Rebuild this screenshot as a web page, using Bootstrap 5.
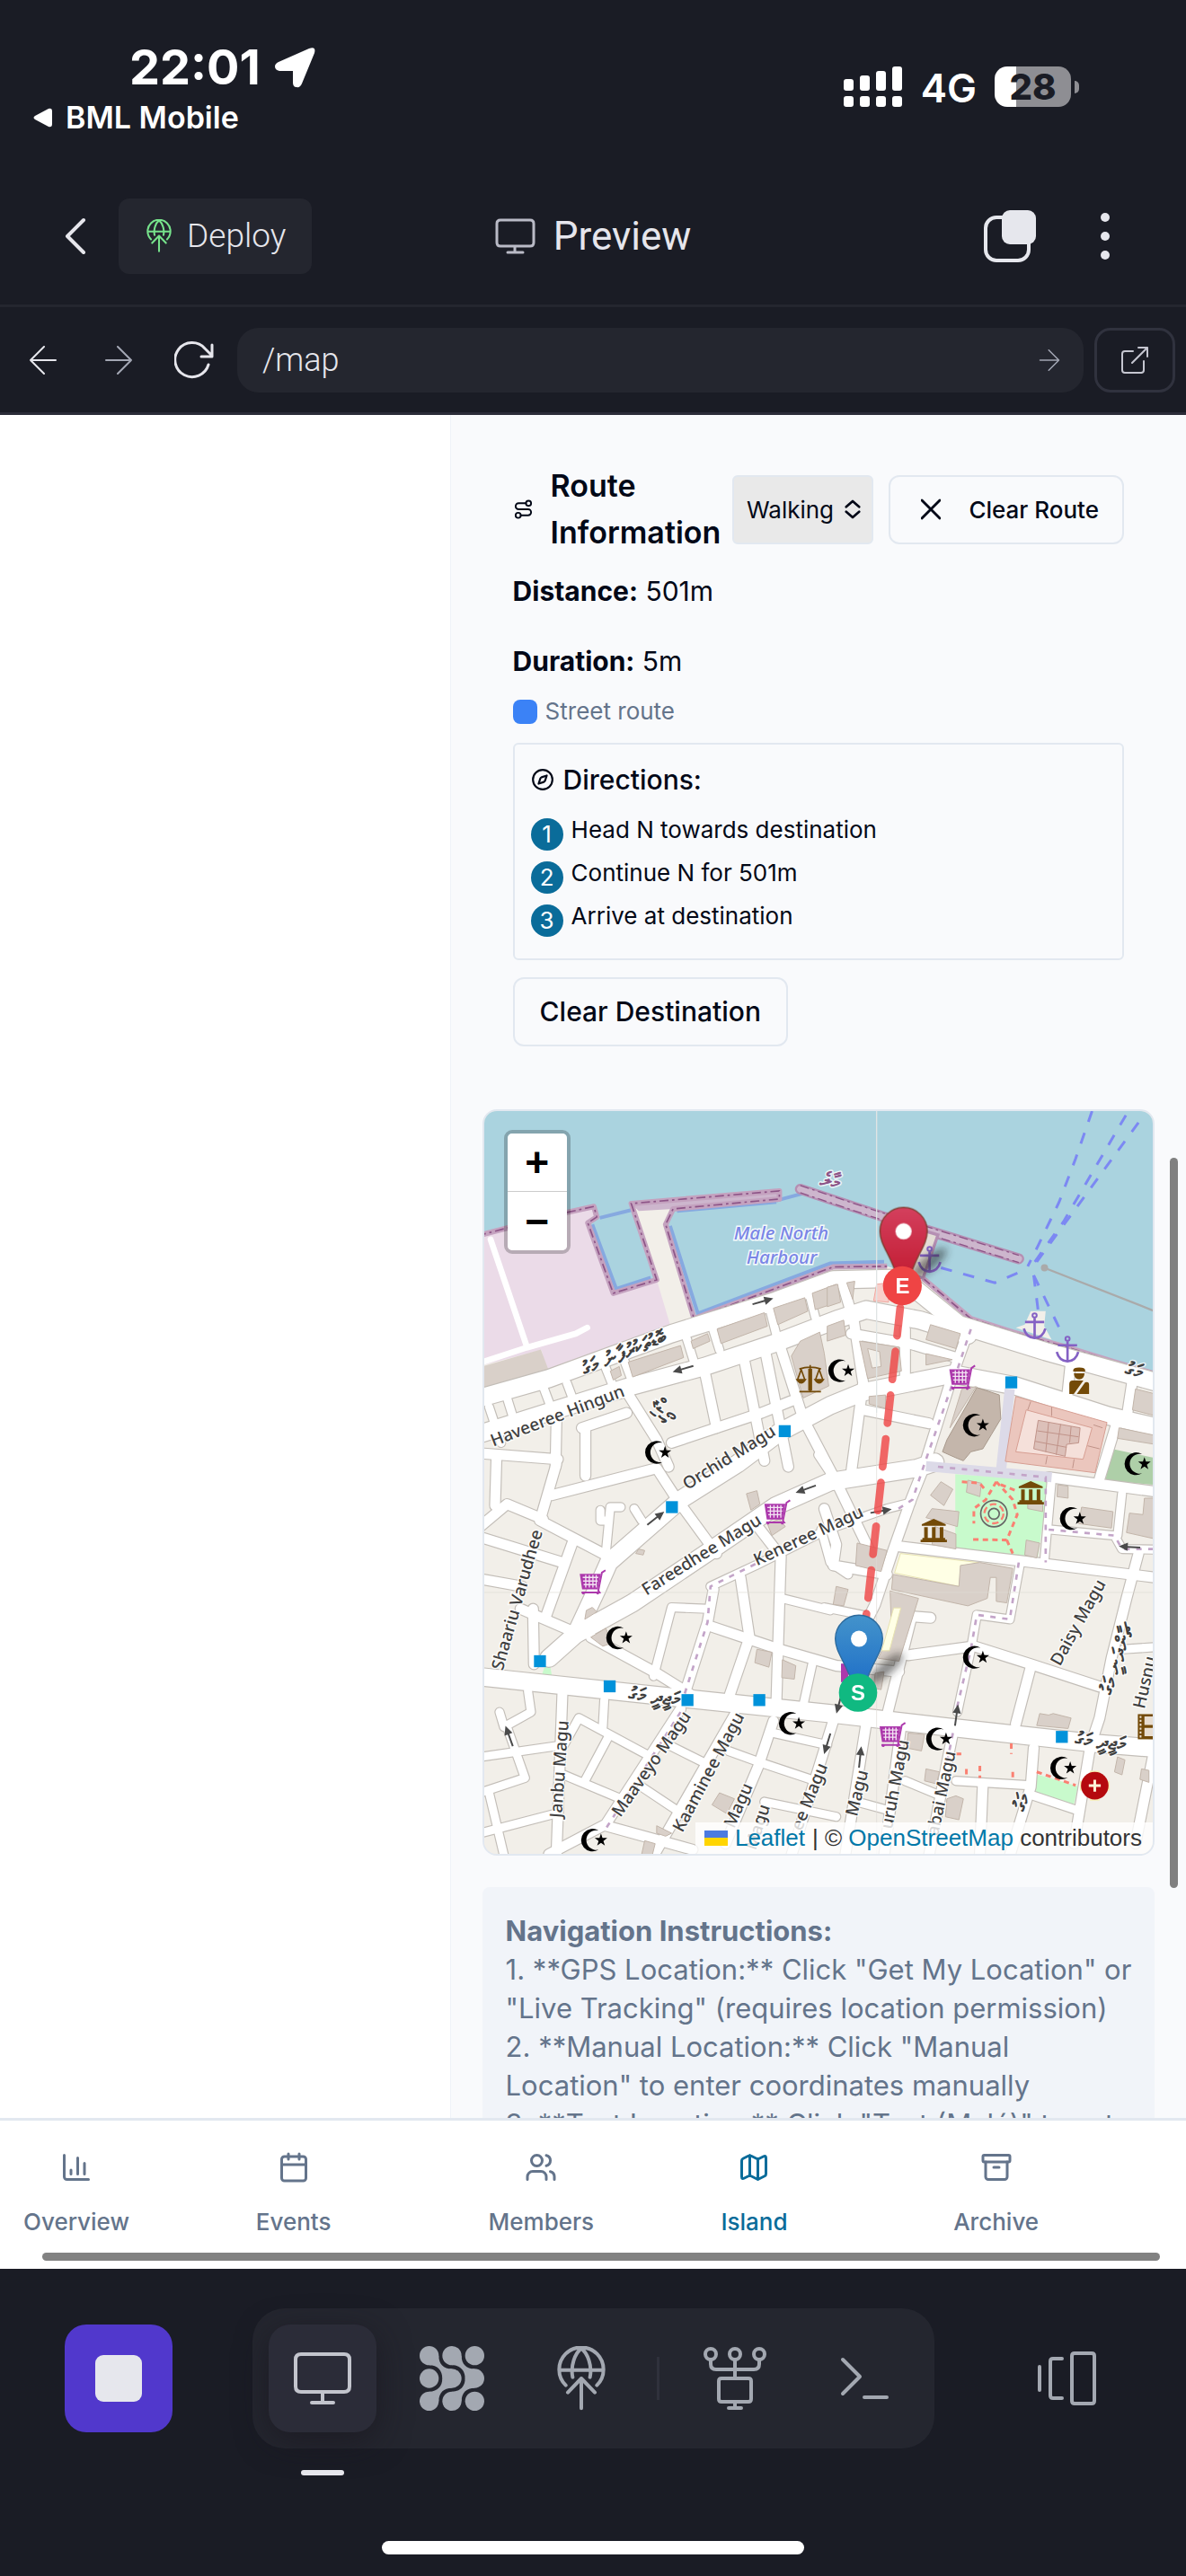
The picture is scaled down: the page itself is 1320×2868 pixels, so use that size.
<!DOCTYPE html>
<html lang="en">
<head>
<meta charset="utf-8">
<meta name="viewport" content="width=device-width, initial-scale=1">
<title>Preview – /map</title>
<link href="https://cdn.jsdelivr.net/npm/bootstrap@5.3.0/dist/css/bootstrap.min.css" rel="stylesheet">
<script src="https://cdn.jsdelivr.net/npm/bootstrap@5.3.0/dist/js/bootstrap.bundle.min.js" defer></script>
<style>
:root{--shell:#1a1c25;--shell-2:#24262f;--shell-3:#2b2c38;--ink:#020817;--muted:#64748b;--line:#e2e8f0;--brand:#0a6c9a}
body{height:100vh;background:var(--shell);font-family:Inter,"Liberation Sans",sans-serif;color:var(--ink);overflow:hidden}
button,a{color:inherit;text-decoration:none}
svg{display:block;flex:none}
.ln{fill:none;stroke:currentColor;stroke-linecap:round;stroke-linejoin:round}
.plain{background:none;border:0;padding:0}
.plex{font-family:Roboto,"Liberation Sans",sans-serif}
/* phone status bar */
.status-area{height:186px;color:#fff}
.status-left{padding:43px 0 0 36px}
.clock{font-size:54px;line-height:64px;font-weight:700;padding-left:108px;gap:16px}
.back-app{font-size:34px;line-height:48px;font-weight:600;gap:14px}
.status-right{padding:70px 119px 0 0;gap:20px;font-size:44px;line-height:56px;font-weight:600}
.battery{width:85px;height:45px;border-radius:14px;background:linear-gradient(90deg,#fff 28%,#8e8e93 28%);color:var(--shell);font-weight:800;font-size:40px;line-height:45px}
.battery-tip{width:5px;height:14px;border-radius:0 6px 6px 0;background:#8e8e93}
/* tool header */
.tool-head{height:156px;border-bottom:3px solid var(--shell-2);color:#e6e6ec;padding:0 72px}
.head-end{gap:66px}
.deploy-btn{background:var(--shell-2);border-radius:12px;height:84px;padding:0 29px 0 31px;gap:17px;font-size:37px;margin-left:36px;font-weight:300}
.tool-title{font-size:44px;gap:20px;font-weight:400}
.tool-title svg{color:#b9bac6}
.url-row{height:120px;border-bottom:3px solid var(--shell-3);padding:0 12px 0 26px;color:#e6e6ec}
.url-nav{gap:40px;padding-right:26px}
.url-nav button{width:44px}
.url-nav svg{margin:auto}
.url-box{background:var(--shell-2);border-radius:24px;height:72px;padding:0 26px 0 28px}
.url-box input{background:none;border:0;color:#e6e6ec;font-size:36px;font-weight:300;outline:0;min-width:0}
.dim{color:#a3a7b4}
.open-btn{width:90px;height:72px;border:3px solid #30323e;border-radius:18px;margin-left:12px;color:#c5c6d0}
/* app */
.app-left{flex:0 0 38%;background:#fff;border-right:1px solid #eff3f8}
.app-panel{background:#f9fafc;padding:53px 35px 0}
.page-thumb{right:9px;top:827px;width:9px;height:813px;border-radius:5px;background:#808080}
.route-card{padding:0 34px 70px}
.route-title{font-size:34px;line-height:52px;font-weight:600;gap:19px}
.mode-pick select{appearance:none;width:157px;height:77px;border:2px solid var(--line);border-radius:6px;background:#e9e9e9;font-size:26px;padding:0 14px;color:var(--ink)}
.mode-pick svg{right:14px;top:27px;pointer-events:none}
.out-btn{border:2px solid var(--line);border-radius:12px;background:#f9fafc;height:77px;font-weight:500;white-space:nowrap}
.clear-route{font-size:26px;width:262px;margin-left:17px;gap:31px;padding:0 26px}
.stat{font-size:30px;line-height:48px;margin-bottom:30px}
.swatch{width:27px;height:27px;border-radius:8px;background:#3b82f6}
.street{font-size:26px;line-height:40px;color:var(--muted);gap:9px;margin:-18px 0 15px}
.dir-box{border:2px solid var(--line);border-radius:6px;padding:18px 18px 24px;margin-bottom:19px}
.dir-head{font-size:30px;line-height:42px;font-weight:500;gap:10px;margin-bottom:17px}
.dir-step{font-size:26px;line-height:36px;height:41px;margin-bottom:7px;gap:9px}
.dir-step:last-child{margin-bottom:0}
.step-no{width:36px;height:36px;border-radius:50%;background:var(--brand);color:#fff;margin-top:5px}
.clear-dest{font-size:30px;padding:0 28px}
.map-frame{border:2px solid var(--line);border-radius:16px;overflow:hidden;margin-bottom:35px;background:#f2efe9}
.map-frame>svg{width:100%;height:auto}
.zoom-ctl{left:22px;top:21px;border:4px solid rgba(0,0,0,.22);border-radius:9px;background-clip:padding-box}
.zoom-ctl button{width:66px;height:65px;border:0;background:#fff;font:700 46px/60px "Liberation Sans",sans-serif;color:#000;padding:0}
.zoom-ctl button:first-child{border-bottom:1px solid #ccc;border-radius:5px 5px 0 0}
.zoom-ctl button:last-child{border-radius:0 0 5px 5px}
.credit{right:0;bottom:0;background:rgba(255,255,255,.8);font:26px/35px "Liberation Sans",Arial,sans-serif;color:#333;padding:0 12px 0 10px;gap:8px}
.credit a{color:#0078a8}
.notes{background:#f1f4f9;border-radius:8px;padding:27px 20px 26px 26px;font-size:31px;line-height:43px;color:var(--muted)}
.tabs-row{height:168px;background:#fff;border-top:3px solid var(--line);padding:34px 0 0 26px;color:var(--muted);font-size:26px;font-weight:500;line-height:40px}
.tabs-row a{gap:23px}
.tabs-row .on{color:var(--brand)}
.tabs-thumb{left:47px;right:29px;bottom:9px;height:9px;border-radius:5px;background:#828282}
/* dock */
.dock-area{height:342px;padding:44px 72px 24px}
.stop-btn{width:120px;height:120px;border-radius:24px;background:#5138cc}
.stop-btn span{width:52px;height:52px;border-radius:9px;background:#e6e7ed}
.dock-group{background:var(--shell-2);border-radius:36px;padding:18px;gap:24px;color:#a3a8b1;margin-right:23px}
.dock-group button{width:120px;height:120px;border-radius:24px}
.dock-group .active{background:var(--shell-3);color:#c3c5cd;box-shadow:0 9px 36px rgba(24,20,28,.6)}
.dock-sep{width:3px;height:48px;background:#2f313c}
.under{width:48px;height:6px;border-radius:3px;background:#e6e6ec;left:36px;top:162px}
.home-bar{width:470px;height:15px;border-radius:8px;background:#fff}
/* map drawing */
#roads path{fill:none;stroke:var(--c);stroke-linejoin:round;stroke-linecap:round;stroke-width:calc(27px + var(--e))}
#roads .w1 path{stroke-width:calc(58px + var(--e))}
#roads .w2 path{stroke-width:calc(33px + var(--e))}
.blg path{fill:#d9d0c9;stroke:#c2b5aa;stroke-width:3}
.foot path{fill:none;stroke:#c3a4c8;stroke-width:8;stroke-dasharray:18 22}
.redfoot path{fill:none;stroke:#fa8072;stroke-width:9;stroke-dasharray:18 14}
.ferry path{fill:none;stroke:#7c88f3;stroke-width:9;stroke-dasharray:38 39}
.lbl text{font-family:"Noto Sans",sans-serif;font-size:57px;font-weight:500;fill:#3f3f3f;stroke:#fff;stroke-width:9px;stroke-opacity:.75;paint-order:stroke;text-anchor:middle}
.lbl .hb{font-style:italic;font-size:62px;fill:#7a86e6;stroke-opacity:.9}
.lbl .dv text{font-size:66px;font-weight:700}
.pin-t{font:700 72px "Liberation Sans",sans-serif;fill:#fff;text-anchor:middle}
</style>
</head>
<body class="d-flex flex-column">
<svg width="0" height="0" class="position-absolute" aria-hidden="true">
 <symbol id="i-globe" viewBox="0 0 162 216"><path class="ln" stroke-width="12" d="M29 131A74 74 0 1 1 133 131M7 80H155M52 104C44 66 60 24 81 8C102 24 118 66 110 104M81 208V108M36 155L81 108L126 155"/></symbol>
 <symbol id="i-monitor" viewBox="0 0 72 72"><path class="ln" stroke-width="4" d="M12 9H60Q66 9 66 15V45Q66 51 60 51H12Q6 51 6 45V15Q6 9 12 9ZM36 51V63M24 63H48"/></symbol>
 <symbol id="i-arrow" viewBox="0 0 32 32"><path class="ln" stroke-width="2" d="M2 16H30M15 1L30 16L15 31"/></symbol>
</svg>

<header class="status-area flex-shrink-0 d-flex justify-content-between">
 <div class="status-left">
  <div class="clock d-flex align-items-center">22:01
   <svg width="45" height="45" viewBox="0 0 45 45"><path fill="#fff" d="M38 1Q46-2 44 6L30 40Q28 45 24 44Q20 44 20 39V26H5Q0 25 0 21Q0 18 4 16Z"/></svg></div>
  <a href="#" class="back-app d-flex align-items-center"><svg width="23" height="22" viewBox="0 0 23 22"><path fill="#fff" d="M3 9L18 1Q22 0 22 4V18Q22 22 18 21L3 13Q0 11 3 9Z"/></svg>BML Mobile</a>
 </div>
 <div class="status-right d-flex align-items-start">
  <svg width="66" height="56" viewBox="0 0 66 56" fill="#fff"><rect x="0" y="18" width="11" height="13" rx="3"/><rect x="18" y="14" width="11" height="17" rx="3"/><rect x="36" y="9" width="11" height="22" rx="3"/><rect x="54" y="4" width="11" height="27" rx="3"/><rect x="0" y="37" width="11" height="12" rx="3"/><rect x="18" y="37" width="11" height="12" rx="3"/><rect x="36" y="37" width="11" height="12" rx="3"/><rect x="54" y="37" width="11" height="12" rx="3"/></svg>
  <span>4G</span>
  <div class="d-flex align-items-center mt-1"><div class="battery text-center">28</div><div class="battery-tip ms-1"></div></div>
 </div>
</header>

<div class="tool-head plex flex-shrink-0 d-flex align-items-center">
 <div class="d-flex align-items-center col">
  <button class="plain" aria-label="Back"><svg width="24" height="42" viewBox="0 0 24 42"><path class="ln" stroke-width="4" d="M21 3L3 21L21 39"/></svg></button>
  <button class="plain deploy-btn d-flex align-items-center"><svg width="28" height="37" style="color:#76e28b"><use href="#i-globe"/></svg>Deploy</button>
 </div>
 <div class="tool-title d-flex align-items-center"><svg width="45" height="40" viewBox="0 0 45 40"><path class="ln" stroke-width="3" d="M6 2H39Q43 2 43 6V27Q43 31 39 31H6Q2 31 2 27V6Q2 2 6 2ZM22 31V38M14 38H31"/></svg>Preview</div>
 <div class="head-end d-flex align-items-center justify-content-end col">
  <button class="plain" aria-label="Tabs"><svg width="60" height="60" viewBox="0 0 60 60"><rect x="3" y="9" width="48" height="48" rx="12" fill="none" stroke="#e6e7ed" stroke-width="4"/><rect x="21" y="1" width="38" height="38" rx="9" fill="#e6e7ed"/></svg></button>
  <button class="plain me-2" aria-label="More"><svg width="20" height="56" viewBox="0 0 20 56" fill="#e6e7ed"><circle cx="10" cy="7" r="5"/><circle cx="10" cy="28" r="5"/><circle cx="10" cy="49" r="5"/></svg></button>
 </div>
</div>

<div class="url-row plex flex-shrink-0 d-flex align-items-center">
 <div class="url-nav d-flex align-items-center">
  <button class="plain" aria-label="Previous"><svg width="32" height="32" viewBox="0 0 32 32"><path class="ln" stroke-width="2" d="M30 16H2M17 1L2 16L17 31"/></svg></button>
  <button class="plain dim" aria-label="Next"><svg width="32" height="32"><use href="#i-arrow"/></svg></button>
  <button class="plain" aria-label="Reload"><svg width="44" height="42" viewBox="0 0 44 42"><path class="ln" stroke-width="3" d="M38 26A19 19 0 1 1 34 8L42 16M42 4V17H30"/></svg></button>
 </div>
 <div class="url-box d-flex align-items-center flex-fill">
  <input class="flex-fill plex p-0" type="text" value="/map" aria-label="Path">
  <button class="plain dim" aria-label="Go"><svg width="24" height="24"><use href="#i-arrow"/></svg></button>
 </div>
 <button class="plain open-btn d-flex align-items-center justify-content-center" aria-label="Open in new tab"><svg width="32" height="32" viewBox="0 0 32 32"><path class="ln" stroke-width="2" d="M14 6H5Q2 6 2 9V27Q2 30 5 30H23Q26 30 26 27V17M13 19L30 2M20 2H30V12"/></svg></button>
</div>

<main class="d-flex flex-fill overflow-hidden position-relative" style="min-height:0">
 <div class="app-left"></div>
 <section class="app-panel flex-fill">
  <div class="route-card">
   <div class="d-flex align-items-center">
    <h2 class="route-title d-flex align-items-center m-0 flex-fill"><svg width="23" height="24" viewBox="0 0 24 24"><path class="ln" stroke-width="2" d="M9 19h8.500a3.500 3.500 0 0 0 0-7h-11a3.500 3.500 0 0 1 0-7H15"/><circle class="ln" stroke-width="2" cx="6" cy="19" r="3"/><circle class="ln" stroke-width="2" cx="18" cy="5" r="3"/></svg><span>Route<br>Information</span></h2>
    <label class="mode-pick position-relative"><select aria-label="Travel mode"><option>Walking</option><option>Cycling</option></select><svg class="position-absolute" width="18" height="22" viewBox="0 0 20 24"><path class="ln" stroke-width="3" d="M2 9L10 2L18 9M2 15L10 22L18 15"/></svg></label>
    <button class="out-btn clear-route d-flex align-items-center justify-content-end"><svg width="22" height="24" viewBox="0 0 22 22"><path class="ln" stroke-width="3" d="M1 1L21 21M21 1L1 21"/></svg>Clear Route</button>
   </div>
   <div class="stat" style="margin-top:15px"><strong>Distance:</strong> 501m</div>
   <div class="stat"><strong>Duration:</strong> 5m</div>
   <div class="street d-flex align-items-center"><span class="swatch"></span>Street route</div>
   <div class="dir-box">
    <div class="dir-head d-flex align-items-center"><svg width="26" height="26" viewBox="0 0 24 24"><circle class="ln" stroke-width="2" cx="12" cy="12" r="10"/><path class="ln" stroke-width="2" d="M16.200 7.800L14.400 13.200Q14 14 13.200 14.400L7.800 16.200L9.600 10.800Q10 10 10.800 9.600Z"/></svg>Directions:</div>
    <div class="dir-step d-flex"><span class="step-no text-center">1</span>Head N towards destination</div>
    <div class="dir-step d-flex"><span class="step-no text-center">2</span>Continue N for 501m</div>
    <div class="dir-step d-flex"><span class="step-no text-center">3</span>Arrive at destination</div>
   </div>
   <button class="out-btn clear-dest">Clear Destination</button>
  </div>

  <div class="map-frame position-relative">
   <svg viewBox="24 51 2235 2484" role="img" aria-label="Street map of Malé">
    <defs>
     <g id="m-mosque"><path d="M22-32A38 38 0 1 0 22 32A33 33 0 1 1 22-32Z"/><path transform="translate(30)" d="M0-22L5-7H21L8 3L13 18L0 9L-13 18L-8 3L-21-7H-5Z"/></g>
     <g id="m-anchor" fill="none" stroke="#8461c4" stroke-width="8"><circle cy="-36" r="7" stroke-width="6"/><path d="M0-28V38M-32-14H32M-36 8Q-28 38 0 40Q28 38 36 8"/></g>
     <g id="m-cart"><path fill="#ac39ac" d="M-38-26H32L22 26H-30Z"/><path d="M-28-14H24M-27 -2H22M-25 10H19M-18-22V20M-6-22V20M6-22V20M17-22V20" stroke="#f3e3f3" stroke-width="4"/><path fill="none" stroke="#ac39ac" stroke-width="6" d="M48-38L36-30L24 30L28 36H-32"/><circle cx="-26" cy="38" r="5" fill="#ac39ac"/><circle cx="22" cy="38" r="5" fill="#ac39ac"/></g>
     <g id="m-museum" fill="#734a08"><path d="M0-40L40-22V-17H-40V-22ZM-32-12H-20V24H-32ZM-6-12H6V24H-6ZM20-12H32V24H20ZM-38 24H38V30H44V38H-44V30H-38Z"/></g>
     <path id="m-bus" fill="#0092da" d="M-20-20H20V20H-20Z"/>
     <g id="m-way" fill="#4a4a4a"><path d="M-36-3H6V-14L36 0L6 14V3H-36Z"/></g>
     <g id="roads">
      <g class="w1">
       <path d="M10 1010L240 945L650 795L1000 685L1190 615L1420 610L1610 765L1900 855L2280 960"/>
       <path d="M10 1130L500 975L760 905L1000 825L1210 745L1300 715L1480 750L1640 800"/>
       <path d="M330 1800L400 1650L440 1560L680 1350L870 1230L1010 1125L1180 1035L1290 990L1590 930L1800 970L2110 1070L2280 1110"/>
       <path d="M240 1880L330 1800L520 1695L780 1520L1000 1370L1180 1290L1470 1245L1530 1225"/>
       <path d="M10 1942L700 2015L1180 2065L1570 2110L2070 2165L2280 2182"/>
      </g>
      <g class="w2">
       <path d="M1640 790L1590 930L1490 1250L1450 1350L1390 1520L1330 1700L1300 1760"/>
       <path d="M1400 1505L1820 1555L2280 1612"/><path d="M1910 1275L2280 1325"/>
       <path d="M1440 1870L1660 1840L1850 1900L2080 1975"/><path d="M1450 1750L1370 2070"/><path d="M1450 1740L1515 1745"/>
       <path d="M1850 1910L1800 2100"/><path d="M2210 1530L2170 1680L2120 1880L2080 2080L2050 2170L1995 2500"/>
       <path d="M770 1770L890 1810L1010 1850L1200 1905L1410 1925"/><path d="M930 1430L1015 1540L1010 1700L1000 2030"/>
       <path d="M880 1610L910 1810L840 2015"/><path d="M790 1650L770 1760L690 2010"/><path d="M380 1810L600 1930L720 2005"/>
       <path d="M145 1715L330 1795"/><path d="M320 1490L230 1740"/><path d="M10 1475L285 1560"/><path d="M10 1615L150 1640"/>
       <path d="M265 1230L210 1420L430 1535"/><path d="M10 1440L100 1365L220 1415"/><path d="M65 1200L60 1370"/>
       <path d="M250 1335L600 1245L665 1345L800 1530"/><path d="M187 1715L190 1900"/>
       <path d="M960 840L1040 1240M890 870L960 1220M760 920L800 1110"/><path d="M650 1160L950 1060L1050 1020"/><path d="M1010 830L1090 1080L1200 1290L1340 1580"/>
       <path d="M500 990L600 1150L640 1240"/><path d="M10 1195L270 1215M265 1090L262 1240M350 1110L500 1060M362 1110L362 1270"/>
       <path d="M1225 640L1260 760L1290 960L1250 1260"/><path d="M1250 795L1450 830L1600 875"/><path d="M1290 1050L1510 1095"/><path d="M1430 780L1430 950"/>
       <path d="M2140 1085L2080 1280"/><path d="M1985 880L1970 1020M2190 950L2170 1080"/>
       <path d="M680 2050L430 2435L240 2535M430 2440L720 2520"/><path d="M860 2070L590 2540"/><path d="M990 2090L940 2240L830 2500"/>
       <path d="M1190 2090L1050 2540M1300 2100L1230 2540M1415 2120L1360 2540M1590 2130L1570 2230L1510 2540M1690 2300L1680 2540M1860 2180L1850 2310L1780 2540"/>
       <path d="M285 2000L265 2540"/><path d="M1160 1380L1200 1500L1190 1570L1370 1600"/><path d="M2260 2200L2200 2500"/>
      </g>
      <g class="w3">
       <path d="M1920 1280L1895 1560"/><path d="M1915 1450L2130 1470L2155 1515L2280 1517M2155 1330L2140 1470"/>
       <path d="M1815 1560L1780 1750L1670 1735L1650 1850L1605 2060"/><path d="M2160 1850L2280 1842"/>
       <path d="M780 1640L930 1570L1170 1450L1370 1380L1450 1360"/><path d="M590 1940L650 1710L770 1715"/><path d="M1120 1900L1085 2060"/>
       <path d="M170 1990L180 2060L90 2110L75 2060M100 2110L160 2280L10 2330"/><path d="M10 2210L290 2170L340 2080L600 2220"/>
       <path d="M425 2020L420 2110M440 2140L360 2290M290 2270L480 2350M10 2465L260 2400M40 2330L90 2540"/>
       <path d="M640 2170L780 2240M550 2310L700 2410M840 2190L950 2230L1130 2290M990 2130L1170 2170M960 2360L1200 2410"/>
       <path d="M1270 2360L1380 2390M1430 2290L1550 2340M1600 2290L1850 2305M1860 2340L2010 2390"/>
       <path d="M430 1530L445 1375L480 1375M440 1420H412V1385M550 1420L525 1380"/><path d="M1150 1450L1180 1560L1240 1600M1160 1710L1310 1740M1020 1680L1180 1720M1200 1290L1140 1200"/>
       <path d="M40 1040L80 1160M100 1010L125 1090M220 970L250 1050M300 960L330 1040M430 910L450 960M490 880L520 960M700 810L725 890M785 770L810 850M975 700L1000 800M1110 660L1130 740"/>
      </g>
     </g>
     <linearGradient id="gr" x2="0" y2="1"><stop stop-color="#d4405e"/><stop offset="1" stop-color="#c31d33"/></linearGradient>
     <linearGradient id="gb" x2="0" y2="1"><stop stop-color="#4393cb"/><stop offset="1" stop-color="#2070c8"/></linearGradient>
     <filter id="soft"><feGaussianBlur stdDeviation="14"/></filter>
    </defs>
    <rect x="0" y="0" width="2300" height="2600" fill="#f2efe9"/>
    <!-- sea, harbour basins and reclaimed land -->
    <path id="sea" fill="#aad3df" d="M0 0H2300V940L2130 890L1970 840L1790 790L1650 745L1490 610L1370 570L1190 572L725 745L630 430L655 378L1010 345V318L515 360L600 615L455 660L370 425L405 410L390 370L300 390L0 468Z"/>
    <path fill="#ebdbe8" d="M0 468L300 390L390 370L405 410L370 425L455 660L600 615L648 775L235 925L215 850L0 905Z"/>
    <path fill="#cdb6cd" d="M515 360L1010 318V345L655 378L540 385Z"/>
    <path fill="none" stroke="#86a9e0" stroke-width="12" d="M410 408L515 382M1000 350L1090 326M385 430L465 645L580 608M668 385L1000 355M645 435L738 728L1180 560L1360 555"/>
    <path fill="none" stroke="#c4a2bf" stroke-width="18" stroke-linejoin="round" d="M0 468L300 390L390 370L400 405L370 425L455 660L600 615L515 360L1010 318V345L655 378L630 430L725 745L1190 572L1370 570M1490 610L1650 745L1790 790L1970 840L2130 890L2300 940"/>
    <path fill="none" stroke="#8d5487" stroke-width="5" stroke-dasharray="30 12 8 12" d="M0 468L300 390L390 370L400 405L370 425L455 660L600 615L515 360L1010 318V345L655 378L630 430L725 745L1190 572L1370 570M1490 610L1650 745L1790 790L1970 840L2130 890L2300 940"/>
    <path fill="none" stroke="#b58fb3" stroke-width="36" stroke-linecap="round" d="M1080 312L1350 402L1810 545"/>
    <path fill="none" stroke="#cdb6cd" stroke-width="22" stroke-linecap="round" d="M1080 312L1350 402L1810 545"/>
    <path fill="none" stroke="#8d5487" stroke-width="4" stroke-dasharray="30 12 8 12" d="M1080 300L1350 390L1810 533M1080 324L1350 414L1810 557"/>
    <path fill="#e4ddd6" stroke="#b58fb3" stroke-width="10" d="M1490 450L1540 465L1490 610L1400 580Z"/>
    <path fill="#f2efe9" d="M1800 775L1830 765L1850 720H1900L1895 770L1920 815Z"/>
    <path stroke="#aaa" stroke-width="7" d="M1895 575L2270 722"/><circle cx="1896" cy="575" r="12" fill="#aaa"/>
    <path fill="#d9d0c9" d="M0 910L213 848L240 920L0 1005Z"/>
    <g fill="none" stroke="#fff" stroke-width="20" stroke-linecap="round"><path d="M45 480L165 835M24 888L165 842L330 795L368 775"/></g>
    <!-- parks, squares, schools -->
    <path fill="#c8facc" d="M1598 1265L1912 1285L1870 1565L1598 1525Z"/>
    <path fill="#c8facc" d="M1870 2268L2008 2308L1990 2388L1858 2345Z"/>
    <path fill="#c8facc" d="M225 1910H245L250 1940H215Z"/>
    <path fill="#aecfa8" d="M2120 1180L2260 1210V1300L2100 1285Z"/>
    <path fill="#ffffe5" stroke="#e8e3b0" stroke-width="3" d="M1415 1530L1675 1560L1610 1640L1395 1595Z"/>
    <use href="#roads" style="--c:#c3beb8;--e:7px"/>
    <use href="#roads" style="--c:#fff;--e:0px"/>
    <path fill="none" stroke="#dcdae8" stroke-width="34" d="M1500 1238L1920 1275M1780 980L1750 1260"/>
    <!-- buildings -->
    <g class="blg">
     <path d="M505 890L680 835L690 875L520 940ZM715 820L770 795L778 820L722 845ZM802 780L960 725L970 770L815 828ZM990 710L1095 675L1105 720L1005 765ZM1120 660L1200 630L1205 690L1130 715ZM445 920L475 905L482 935L455 950Z"/>
     <path d="M1050 870L1080 820L1145 790L1160 860L1175 970L1090 1010Z"/><path d="M1170 640L1205 630L1215 690L1170 705ZM1235 625L1262 620L1255 680ZM1170 770L1225 750L1232 800L1170 820Z"/>
     <path d="M1278 820L1410 840L1418 920L1305 945Z"/><path style="fill:#f2efe9" d="M1305 845L1345 855L1350 905L1320 910Z"/>
     <path d="M1515 765L1615 795L1600 845L1500 815ZM1500 862L1588 882L1500 900ZM1310 1005L1365 1000V1045L1310 1030Z"/>
     <path d="M1270 1495L1370 1520L1350 1590L1265 1570ZM1200 1640L1240 1650L1225 1705L1190 1700ZM1550 1290L1590 1315L1560 1370L1515 1335ZM1520 1380L1610 1390L1605 1440L1500 1410ZM1530 1440L1600 1465V1515L1520 1500ZM1640 1285L1685 1295L1680 1340L1635 1325Z"/>
     <path d="M1390 1600L1610 1640L1615 1570L1680 1560L1790 1580L1770 1695L1735 1690V1610H1715L1705 1680L1640 1705L1385 1650ZM1380 1655L1475 1680L1410 1890L1340 1880L1385 1790Z"/>
     <path style="fill:#ffffe5;stroke:#e8e3b0" d="M1392 1712H1416L1378 1855H1352Z"/>
     <path d="M1840 1360H1890V1390L1840 1380ZM1835 1485L1880 1495L1870 1545L1830 1535ZM1940 1300L1975 1305V1345L1938 1340ZM2020 1375L2125 1390L2120 1445L2010 1430ZM2180 1395L2225 1400L2230 1345H2260V1480L2170 1460Z"/>
     <path d="M1880 2065L1910 2070L1925 2065L1985 2080L1975 2115L1870 2105ZM1440 2130L1495 2135L1485 2190L1435 2180ZM1500 2250L1545 2260L1535 2300L1495 2290ZM1570 2350L1600 2340L1625 2350L1610 2420L1565 2410ZM2140 2210L2165 2220L2155 2270L2130 2260ZM2220 2250L2245 2255V2295L2215 2285ZM1330 1930L1360 1925L1350 1985L1325 1980Z"/>
     <path d="M935 1850L985 1860L975 1910L928 1895ZM1020 1885L1065 1905L1060 1950L1018 1945ZM900 1330L935 1320L945 1365L915 1385ZM970 1430L1010 1415L1030 1440L985 1470ZM365 1720L385 1710L400 1725L360 1750ZM380 1810L430 1780L450 1830L420 1840ZM810 2330L860 2350L835 2400L785 2370ZM600 2440L650 2465L630 2475L600 2465ZM560 2490L595 2500L585 2540L550 2535ZM540 1515L560 1520L555 1535L530 1530Z"/>
     <path style="fill:#c4b6ab;stroke:#a8998c" d="M1670 975L1745 1000L1750 1080L1720 1130L1690 1180L1650 1190L1625 1220L1600 1210L1555 1190L1570 1150Z"/>
     <path d="M1620 980L1668 972L1580 1110ZM2145 1110L2265 1135V1165L2140 1145ZM2200 980L2260 995V1068L2190 1050Z"/>
     <path style="fill:#ebc6bd;stroke:#d79f93" d="M1800 1005L2105 1092L2065 1260L1765 1222Z"/>
     <path style="fill:#f5e0da;stroke:#d79f93" d="M1835 1050L2055 1110L2025 1215L1800 1190Z"/>
     <path style="fill:#dcc0b9;stroke:#c09389" d="M1875 1085L2015 1110L2010 1160L1970 1165L1965 1205L1860 1180Z"/>
     <path style="fill:none;stroke:#c09389" d="M1872 1120L2010 1140M1865 1155L1970 1175M1910 1090L1900 1190M1950 1098L1935 1200M1985 1105L1980 1160M1850 1022L1840 1050M1920 1040V1070M2090 1110L2060 1100M2080 1180L2040 1170M1900 1232L1905 1205M1990 1245L1995 1215"/>
     <path style="fill:#f8cfca;stroke:#f0a8a0" d="M1335 630L1375 625V690L1325 685Z"/>
    </g>
    <g class="foot"><path d="M1650 780L1600 930L1495 1230L1455 1350L1400 1385"/><path d="M1540 1240L1900 1275L1900 1560"/><path d="M1910 1450L2130 1470L2155 1515H2260"/><path d="M1810 1560L1780 1750L1670 1735L1650 1850L1600 2060"/><path d="M930 1565L780 1640L770 1760L690 2010"/><path d="M1590 2130L1570 2230M680 2060L430 2450"/></g>
    <g class="redfoot"><path d="M1620 1290L1680 1295L1700 1320M1735 1290L1700 1350L1660 1380V1430M1735 1290L1790 1350L1805 1400L1770 1485L1650 1483M1770 1485L1790 1530M1750 1300L1800 1320"/><circle cx="1727" cy="1397" r="32" fill="none" stroke="#fa8072" stroke-width="7" stroke-dasharray="22 12"/><path d="M1785 2165V2200M1600 2200H1630M1680 2240V2280M1635 2250V2280M1790 2260V2280M1870 2260L2000 2305"/></g>
    <g fill="none" stroke="#666" stroke-width="5"><circle cx="1727" cy="1397" r="44"/><circle cx="1727" cy="1397" r="18"/></g>
    <path stroke="#e0e4e4" stroke-width="4" d="M1335 0V1060"/><path stroke="#dedbd5" stroke-width="2" d="M1335 1060V2600M0 1660H2300"/>
    <g class="ferry"><path d="M2055 51L2000 210L1945 355L1875 500L1840 570"/><path d="M2168 65L1960 420L1860 560"/><path d="M2210 90L1870 555"/><path d="M1550 575L1730 625L1812 590"/><path d="M1860 600L1875 720"/><path d="M1860 600L1945 775"/></g>
    <!-- labels -->
    <g class="lbl">
     <text class="hb" x="1016" y="481">Male North</text><text class="hb" x="1018" y="561">Harbour</text>
     <text transform="translate(275 1088) rotate(-21)">Haveeree Hingun</text>
     <text transform="translate(852 1225) rotate(-32)">Orchid Magu</text>
     <text transform="translate(760 1550) rotate(-32)">Fareedhee Magu</text>
     <text transform="translate(1115 1488) rotate(-25)">Keneree Magu</text>
     <text transform="translate(152 1690) rotate(-74)">Shaariu Varudhee</text>
     <text transform="translate(294 2252) rotate(-86)">Janbu Magu</text>
     <text transform="translate(598 2244) rotate(-55)">Maaveyo Magu</text>
     <text transform="translate(790 2270) rotate(-62)">Kaaminee Magu</text>
     <text transform="translate(890 2380) rotate(-66)">Magu</text><text transform="translate(955 2450) rotate(-72)">Magu</text>
     <text transform="translate(1128 2350) rotate(-68)">ee Magu</text><text transform="translate(1288 2335) rotate(-76)">Magu</text>
     <text transform="translate(1415 2305) rotate(-79)">uruh Magu</text><text transform="translate(1570 2335) rotate(-78)">abai Magu</text>
     <text transform="translate(2025 1770) rotate(-61)">Daisy Magu</text><text transform="translate(2250 1965) rotate(-77)">Husnu</text>
     <g class="dv">
      <text transform="translate(500 880) rotate(-22)">ބޮޑުތަކުރުފާނު މަގު</text><text transform="translate(590 2030) rotate(6)">މަޖީދީ މަގު</text>
      <text transform="translate(2160 1890) rotate(-72)">ޗާންދަނީ މަގު</text><text transform="translate(2080 2180) rotate(6)">މަޖީދީ މަގު</text>
      <text transform="translate(595 1060) rotate(68)">އޯކިޑް</text><text transform="translate(1840 2370) rotate(-70)">މަގު</text><text transform="translate(2190 940) rotate(14)">މަގު</text>
      <text style="fill:#8d5487" transform="translate(1175 305) rotate(14)">މާލެ</text>
     </g>
    </g>
    <!-- points of interest -->
    <g id="pois">
     <use href="#m-way" transform="translate(955 687) rotate(-16)"/><use href="#m-way" transform="translate(688 913) rotate(164)"/><use href="#m-way" transform="translate(597 1412) rotate(-38)"/><use href="#m-way" transform="translate(1098 1315) rotate(160)"/><use href="#m-way" transform="translate(1350 1388) rotate(-10)"/><use href="#m-way" transform="translate(107 2140) rotate(-110)"/><use href="#m-way" transform="translate(1170 2166) rotate(107)"/><use href="#m-way" transform="translate(1280 2210) rotate(-84)"/><use href="#m-way" transform="translate(1602 2070) rotate(-82)"/><use href="#m-way" transform="translate(2180 1508) rotate(184)"/><use href="#m-way" transform="translate(1210 2030) rotate(105)"/>
     <use href="#m-mosque" x="598" y="1192"/><use href="#m-mosque" x="1210" y="919"/><use href="#m-mosque" x="1660" y="1101"/><use href="#m-mosque" x="2200" y="1230"/><use href="#m-mosque" x="468" y="1812"/><use href="#m-mosque" x="1045" y="2098"/><use href="#m-mosque" x="384" y="2488"/><use href="#m-mosque" x="1984" y="1413"/><use href="#m-mosque" x="1660" y="1877"/><use href="#m-mosque" x="1537" y="2150"/><use href="#m-mosque" x="1952" y="2247"/>
     <use href="#m-bus" x="1028" y="1121"/><use href="#m-bus" x="1785" y="958"/><use href="#m-bus" x="651" y="1375"/><use href="#m-bus" x="210" y="1890"/><use href="#m-bus" x="443" y="1974"/><use href="#m-bus" x="703" y="2020"/><use href="#m-bus" x="943" y="2020"/><use href="#m-bus" x="1954" y="2143"/>
     <use href="#m-cart" x="1616" y="940"/><use href="#m-cart" x="998" y="1390"/><use href="#m-cart" x="381" y="1624"/><use href="#m-cart" x="1383" y="2134"/>
     <use href="#m-anchor" x="1512" y="548"/><use href="#m-anchor" x="1863" y="770"/><use href="#m-anchor" x="1973" y="848"/>
     <use href="#m-museum" x="1526" y="1454"/><use href="#m-museum" x="1850" y="1328"/>
     <g transform="translate(1113 945)" fill="none" stroke="#734a08" stroke-width="5"><path d="M0-45V42M-36 44H36M-36-32Q0-44 36-32M-30-30L-42 4M-30-30L-18 4M30-30L18 4M30-30L42 4" /><path fill="#734a08" d="M-44 4H-16Q-30 26-44 4ZM16 4H44Q30 26 16 4ZM-4-30H4V38H-4Z"/></g>
     <g transform="translate(2012 952)" fill="#734a08"><path d="M-20-34Q-20-44 0-44Q20-44 20-34V-30H-20ZM-18-24H18Q16-4 0-4Q-16-4-18-24ZM-33 45V12Q-33 0-22 0H14L-18 45ZM-8 45L20 6Q33 2 33 14V45Z"/></g>
     <g transform="translate(2064 2306)"><path d="M-16-50H16V50H-16ZM-50-16H50V16H-50Z" fill="#f6efb4"/><circle r="46" fill="#b50a0e"/><path d="M0-20V20M-20 0H20" stroke="#fff3d8" stroke-width="9"/></g>
     <g transform="translate(2208 2067)"><path d="M0 0H60V84H0Z" fill="#734a08"/><path d="M22 8H60V36H22ZM22 46H60V74H22Z" fill="#e8ddd0"/><path d="M9 6V80" stroke="#e8ddd0" stroke-width="6" stroke-dasharray="7 6"/></g>
     <path fill="#ac39ac" d="M1216 1898H1240V1960H1216Z"/>
    </g>
    <!-- route and markers -->
    <path d="M1422 635L1272 1995" fill="none" stroke="#ef4444" stroke-opacity=".8" stroke-width="26" stroke-linecap="round" stroke-dasharray="94 53" stroke-dashoffset="-74"/>
    <g filter="url(#soft)" fill="#222" opacity=".55"><ellipse cx="1510" cy="560" rx="75" ry="22" transform="rotate(-40 1510 560)"/><ellipse cx="1365" cy="1915" rx="75" ry="22" transform="rotate(-40 1365 1915)"/></g>
    <g transform="translate(1425 453)"><path fill="url(#gr)" stroke="#7a3a2a" stroke-width="4" d="M0-80A79 79 0 0 1 79-1C79 45 45 75 22 150H-22C-45 75-79 45-79-1A79 79 0 0 1 0-80Z"/><circle r="27" fill="#fff"/></g>
    <g transform="translate(1276 1815)"><path fill="url(#gb)" stroke="#2d6a9c" stroke-width="4" d="M0-79A79 79 0 0 1 79 0C79 45 45 75 22 150H-22C-45 75-79 45-79 0A79 79 0 0 1 0-79Z"/><circle r="27" fill="#fff"/></g>
    <circle cx="1421" cy="635" r="65" fill="#ef4444"/><text class="pin-t" x="1422" y="660">E</text>
    <circle cx="1273" cy="1995" r="64" fill="#10b981"/><text class="pin-t" x="1273" y="2020">S</text>
   </svg>
   <div class="zoom-ctl position-absolute d-flex flex-column"><button aria-label="Zoom in">+</button><button aria-label="Zoom out">−</button></div>
   <div class="credit position-absolute d-flex align-items-center"><a href="#" class="d-flex align-items-center gap-2"><svg width="26" height="17" viewBox="0 0 26 17"><path fill="#4c7be1" d="M0 0H26V9H0Z"/><path fill="#ffd500" d="M0 8H26V17H0Z"/></svg>Leaflet</a><span>| © <a href="#">OpenStreetMap</a> contributors</span></div>
  </div>

  <div class="notes"><strong>Navigation Instructions:</strong><br>1. **GPS Location:** Click "Get My Location" or "Live Tracking" (requires location permission)<br>2. **Manual Location:** Click "Manual Location" to enter coordinates manually<br>3. **Test Location:** Click "Test (Malé)" to set</div>
 </section>
 <div class="page-thumb position-absolute"></div>
</main>

<nav class="tabs-row position-relative flex-shrink-0">
 <div class="d-flex">
  <div class="col"><a href="#" class="d-inline-flex flex-column align-items-center"><svg width="36" height="36" viewBox="0 0 24 24"><path class="ln" stroke-width="2" d="M3 3v16a2 2 0 0 0 2 2h16M18 17V9M13 17V5M8 17v-3"/></svg>Overview</a></div>
  <div class="col"><a href="#" class="d-inline-flex flex-column align-items-center"><svg width="36" height="36" viewBox="0 0 24 24"><rect class="ln" stroke-width="2" x="3" y="4" width="18" height="18" rx="2"/><path class="ln" stroke-width="2" d="M8 2v4M16 2v4M3 10h18"/></svg>Events</a></div>
  <div class="col"><a href="#" class="d-inline-flex flex-column align-items-center"><svg width="36" height="36" viewBox="0 0 24 24"><path class="ln" stroke-width="2" d="M16 21v-2a4 4 0 0 0-4-4H6a4 4 0 0 0-4 4v2M22 21v-2a4 4 0 0 0-3-3.870M16 3.130a4 4 0 0 1 0 7.750"/><circle class="ln" stroke-width="2" cx="9" cy="7" r="4"/></svg>Members</a></div>
  <div class="col"><a href="#" class="on d-inline-flex flex-column align-items-center"><svg width="36" height="36" viewBox="0 0 24 24"><path class="ln" stroke-width="2" d="M14 5.500L10 3.500Q9 3 8 3.500L4 5.500Q3 6 3 7V19Q3 21 5 20L8 18.500Q9 18 10 18.500L14 20.500Q15 21 16 20.500L20 18.500Q21 18 21 17V5Q21 3 19 4L16 5.500Q15 6 14 5.500ZM15 6V21M9 3V18"/></svg>Island</a></div>
  <div class="col"><a href="#" class="d-inline-flex flex-column align-items-center"><svg width="36" height="36" viewBox="0 0 24 24"><rect class="ln" stroke-width="2" x="2" y="3" width="20" height="5" rx="1"/><path class="ln" stroke-width="2" d="M4 8v11a2 2 0 0 0 2 2h12a2 2 0 0 0 2-2V8M10 12h4"/></svg>Archive</a></div>
 </div>
 <div class="tabs-thumb position-absolute"></div>
</nav>

<footer class="dock-area flex-shrink-0 d-flex flex-column justify-content-between align-items-center">
 <div class="d-flex align-items-center justify-content-between w-100">
  <button class="plain stop-btn d-flex align-items-center justify-content-center" aria-label="Stop"><span></span></button>
  <div class="dock-group d-flex align-items-center">
   <button class="plain active position-relative d-flex align-items-center justify-content-center" aria-label="Preview"><svg width="72" height="72"><use href="#i-monitor"/></svg><span class="under position-absolute"></span></button>
   <button class="plain d-flex align-items-center justify-content-center" aria-label="Agent"><svg width="72" height="72" viewBox="0 0 216 216" fill="currentColor"><circle cx="32" cy="32" r="32"/><circle cx="108" cy="32" r="32"/><circle cx="184" cy="32" r="32"/><circle cx="32" cy="108" r="32"/><circle cx="108" cy="108" r="32"/><circle cx="184" cy="108" r="32"/><circle cx="32" cy="184" r="32"/><circle cx="108" cy="184" r="32"/><circle cx="184" cy="184" r="32"/><path d="M64 32C64 60 80 76 108 76L76 108C76 82 60 64 32 64ZM140 32C140 60 156 76 184 76L152 108C152 82 136 64 108 64ZM64 184C64 156 80 140 108 140L76 108C76 134 60 152 32 152ZM140 184C140 156 156 140 184 140L152 108C152 134 136 152 108 152Z"/></svg></button>
   <button class="plain d-flex align-items-center justify-content-center" aria-label="Deployments"><svg width="54" height="72"><use href="#i-globe"/></svg></button>
   <span class="dock-sep"></span>
   <button class="plain d-flex align-items-center justify-content-center" aria-label="Version control"><svg width="72" height="72" viewBox="0 0 72 72"><g class="ln" stroke-width="4"><circle cx="9" cy="9" r="6"/><circle cx="36" cy="9" r="6"/><circle cx="63" cy="9" r="6"/><path d="M9 16V20Q9 26 15 26H57Q63 26 63 20V16M36 16V36M21 36H51Q54 36 54 39V59Q54 62 51 62H21Q18 62 18 59V39Q18 36 21 36ZM36 62V69M29 69H43"/></g></svg></button>
   <button class="plain d-flex align-items-center justify-content-center" aria-label="Terminal"><svg width="72" height="72" viewBox="0 0 72 72"><path class="ln" stroke-width="4" d="M12 15L31 34L12 53M36 57H61"/></svg></button>
  </div>
  <button class="plain me-4" style="color:#a3a8b1" aria-label="Panels"><svg width="72" height="72" viewBox="0 0 72 72"><path class="ln" stroke-width="4" d="M5 23V49M30 14H20Q17 14 17 17V55Q17 58 20 58H30M44 8H63Q66 8 66 11V61Q66 64 63 64H44Q41 64 41 61V11Q41 8 44 8Z"/></svg></button>
 </div>
 <div class="home-bar"></div>
</footer>
</body>
</html>
